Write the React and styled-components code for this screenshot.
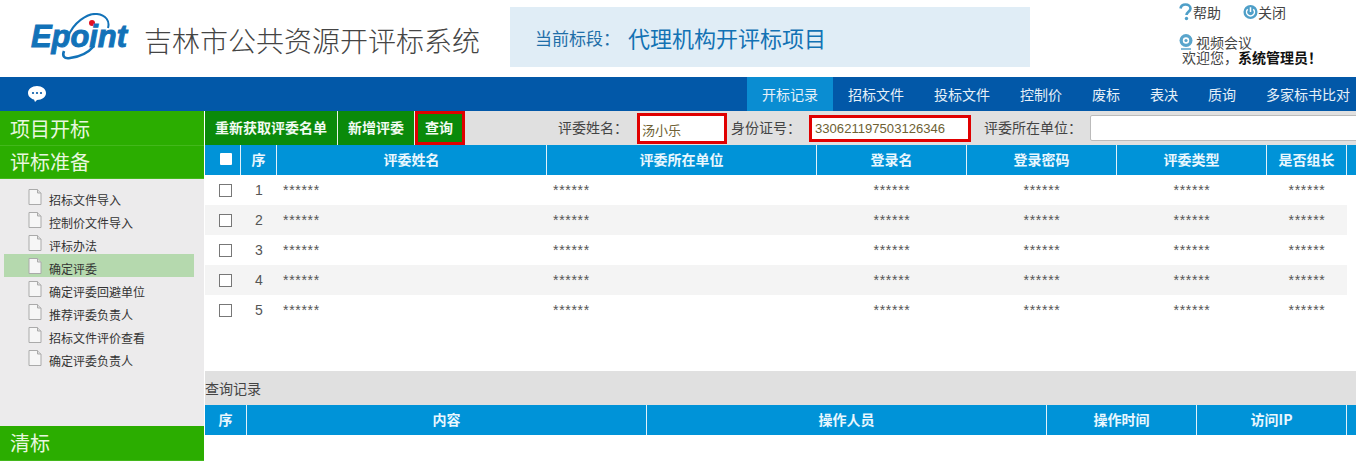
import React from "react";
import styled, { createGlobalStyle } from "styled-components";

const CJK = `"Noto Sans CJK SC", "Liberation Sans", sans-serif`;

const Global = createGlobalStyle`
  html, body { margin: 0; padding: 0; background: #fff; }
  body { font-family: ${CJK}; font-size: 12px; color: #333; overflow: hidden; }
  * { box-sizing: border-box; }
`;

const Page = styled.div`
  width: 1356px;
  height: 463px;
  display: flex;
  flex-direction: column;
  overflow: hidden;
`;

const Header = styled.header`
  height: 77px;
  display: flex;
  flex: none;
`;
const LogoBox = styled.div`
  width: 144px;
  padding: 13px 0 0 29px;
  flex: none;
`;
const Title = styled.h1`
  width: 366px;
  flex: none;
  margin: 0;
  font-size: 28px;
  line-height: 30px;
  font-weight: 300;
  color: #444;
  padding-top: 25px;
`;
const Section = styled.div`
  width: 520px;
  height: 60px;
  margin-top: 7px;
  flex: none;
  background: #e0edf6;
  display: flex;
  align-items: center;
  padding-left: 25px;
  color: #1f6fa8;
`;
const SectionLabel = styled.span`
  font-size: 17px;
  width: 93px;
`;
const SectionValue = styled.span`
  font-size: 22px;
  color: #1272b4;
`;
const UserArea = styled.div`
  margin-left: 148px;
  width: 178px;
  font-size: 14px;
  color: #444;
`;
const TopLinks = styled.div`
  display: flex;
  align-items: center;
  height: 24px;
`;
const TopLink = styled.span`
  display: inline-flex;
  align-items: center;
  width: ${(p) => p.$w}px;
`;
const VideoRow = styled.div`
  display: flex;
  align-items: center;
  gap: 3px;
  margin-top: 10px;
  height: 16px;
  line-height: 14px;
  padding-left: 1px;
`;
const Welcome = styled.div`
  height: 14px;
  line-height: 14px;
  padding-left: 4px;
  white-space: nowrap;
  b { color: #111; }
`;

const Nav = styled.nav`
  height: 34px;
  flex: none;
  background: #0258a8;
  display: flex;
  align-items: center;
`;
const ChatSlot = styled.div`
  width: 747px;
  padding-left: 27px;
  display: flex;
  flex: none;
`;
const NavItem = styled.a`
  width: ${(p) => p.$w}px;
  height: 34px;
  line-height: 34px;
  flex: none;
  text-align: center;
  font-size: 14px;
  color: #e6f0f8;
  background: ${(p) => (p.$active ? "#0a8dd2" : "transparent")};
`;

const Main = styled.div`
  flex: 1;
  display: flex;
  min-height: 0;
`;
const Side = styled.aside`
  width: 204px;
  flex: none;
  display: flex;
  flex-direction: column;
  background: #ecebec;
`;
const SideHead = styled.div`
  height: ${(p) => p.$h}px;
  flex: none;
  background: #2bad00;
  border-bottom: 1px solid #43b81c;
  color: #e8f7df;
  font-size: 20px;
  line-height: ${(p) => p.$lh}px;
  padding-left: 10px;
`;
const SideList = styled.ul`
  flex: 1;
  list-style: none;
  margin: 0;
  padding: 6px 10px 0 4px;
`;
const SideItem = styled.li`
  height: 23px;
  display: flex;
  align-items: center;
  gap: 7px;
  padding-left: 24px;
  font-size: 12px;
  color: #333;
  background: ${(p) => (p.$active ? "#b5d9ae" : "transparent")};
`;
const ItemText = styled.span`
  padding-top: 5px;
`;
const DocIcon = styled.svg`
  width: 14px;
  height: 16px;
  flex: none;
`;
const SideFoot = styled.div`
  height: 2px;
  flex: none;
  background: #fff;
`;

const Content = styled.main`
  flex: 1;
  margin-left: 1px;
  min-width: 0;
  display: flex;
  flex-direction: column;
`;
const Toolbar = styled.div`
  height: 34px;
  flex: none;
  background: #e0e0e0;
  display: flex;
  align-items: center;
`;
const GreenBtn = styled.button`
  width: ${(p) => p.$w}px;
  height: 34px;
  flex: none;
  border: 0;
  border-right: 1px solid #e8f2e8;
  background: #0a8a0a;
  color: #f2fbf2;
  font: 700 14px/30px ${CJK};
  padding: 0 0 2px;
`;
const QueryBtn = styled(GreenBtn)`
  border: 3px solid #e00000;
  padding: 0 2px 2px 0;
  line-height: 24px;
`;
const FieldLabel = styled.span`
  flex: none;
  width: ${(p) => p.$w}px;
  margin-left: ${(p) => p.$ml}px;
  font-size: 14px;
  color: #444;
  padding-bottom: 3px;
  white-space: nowrap;
`;
const Field = styled.div`
  flex: none;
  height: ${(p) => p.$h}px;
  width: ${(p) => p.$w}px;
  background: #fff;
  border: ${(p) => (p.$plain ? "1px solid #bbb" : "3px solid #e00000")};
  border-radius: ${(p) => (p.$plain ? "2px" : "0")};
  display: flex;
  align-items: center;
  padding: ${(p) => p.$pt || 0}px 0 0 ${(p) => p.$pl || 3}px;
  font-size: ${(p) => p.$fs || 13}px;
  color: #6e5f33;
  font-family: ${(p) => (p.$latin ? '"Liberation Sans", sans-serif' : CJK)};
`;

const Grid = styled.div`
  display: grid;
  grid-template-columns: ${(p) => p.$cols};
`;
const HeadCell = styled.div`
  height: 30px;
  background: #0093d8;
  border-right: 1px solid #dff1fa;
  color: #e9f7fe;
  font-size: 14px;
  font-weight: 700;
  display: flex;
  align-items: center;
  justify-content: center;
  padding-bottom: 2px;
`;
const HeadEnd = styled(HeadCell)`
  border-right: 0;
`;
const HeadBox = styled.span`
  width: 12px;
  height: 12px;
  margin-left: 7px;
  background: #fff;
  border-radius: 1px;
`;
const Row = styled(Grid)`
  height: 30px;
  width: ${(p) => p.$width}px;
  background: ${(p) => (p.$alt ? "#f4f4f4" : "#fff")};
`;
const Cell = styled.div`
  height: 30px;
  display: flex;
  align-items: center;
  justify-content: ${(p) => (p.$left ? "flex-start" : "center")};
  padding-left: ${(p) => (p.$left ? "6px" : "0")};
  font: 14px "Liberation Sans", sans-serif;
  color: #555;
`;
const Masked = styled.span`
  margin-top: -1px;
  letter-spacing: 0.7px;
`;
const Check = styled.span`
  width: 13px;
  height: 13px;
  border: 1px solid #777;
  background: #fff;
  margin-left: 5px;
`;
const Rows = styled.div`
  height: 196px;
  flex: none;
`;
const RecordBar = styled.div`
  height: 34px;
  flex: none;
  background: #e0e0e0;
  font-size: 14px;
  line-height: 34px;
  color: #444;
`;

const Doc = () => (
  <DocIcon viewBox="0 0 14 16">
    <path d="M1 .5h8.5L13 4v11.5H1z" fill="#f6f6f6" stroke="#aaa" />
    <path d="M9.5 .5V4H13" fill="#ddd" stroke="#aaa" />
  </DocIcon>
);

const Logo = () => (
  <svg width="112" height="48" viewBox="0 0 112 48">
    <path d="M39 24C44 10 58 0 68 1c9 1 13 7 11 14" fill="none" stroke="#1272b8" strokeWidth="2" />
    <path d="M35 38c-2 5 0 8 6 7 9-1 18-5 24-12" fill="none" stroke="#1272b8" strokeWidth="2.600" />
    <circle cx="63" cy="10" r="3" fill="#e01020" />
    <text x="2" y="34" fontFamily="'Liberation Sans', sans-serif" fontStyle="italic" fontWeight="700" fontSize="32" fill="#1272b8" textLength="96" lengthAdjust="spacingAndGlyphs" stroke="#1272b8" strokeWidth="1">Epoint</text>
  </svg>
);

const ChatIcon = () => (
  <svg width="20" height="18" viewBox="0 0 20 18">
    <path d="M10 1c5 0 9 3 9 7s-4 7-9 7l-2 2-1-2.400C3.500 13.600 1 11 1 8c0-4 4-7 9-7z" fill="#fff" />
    <circle cx="6" cy="8" r="1.100" fill="#0258a8" />
    <circle cx="10" cy="8" r="1.100" fill="#0258a8" />
    <circle cx="14" cy="8" r="1.100" fill="#0258a8" />
  </svg>
);

const navs = [["开标记录", 86, true], ["招标文件", 86], ["投标文件", 86], ["控制价", 72], ["废标", 58], ["表决", 58], ["质询", 58], ["多家标书比对", 114]];
const sideItems = ["招标文件导入", "控制价文件导入", "评标办法", "确定评委", "确定评委回避单位", "推荐评委负责人", "招标文件评价查看", "确定评委负责人"];
const cols = "36px 36px 270px 270px 150px 150px 150px 80px 10px";
const recCols = "42px 400px 400px 150px 150px 9px";
const heads = ["序", "评委姓名", "评委所在单位", "登录名", "登录密码", "评委类型", "是否组长"];
const recHeads = ["序", "内容", "操作人员", "操作时间", "访问IP"];

export default function App() {
  return (
    <Page>
      <Global />
      <Header>
        <LogoBox><Logo /></LogoBox>
        <Title>吉林市公共资源开评标系统</Title>
        <Section>
          <SectionLabel>当前标段：</SectionLabel>
          <SectionValue>代理机构开评标项目</SectionValue>
        </Section>
        <UserArea>
          <TopLinks>
            <TopLink $w={65}>
              <svg width="15" height="18" viewBox="0 0 15 18"><path d="M2.500 5.500C3 2.500 5 1.500 7.500 1.500c3 0 5 1.700 5 4 0 3-4 3.500-4 6.500" fill="none" stroke="#4f9fc8" strokeWidth="2.600" /><circle cx="8.500" cy="15.500" r="1.700" fill="#4f9fc8" /></svg>
              帮助
            </TopLink>
            <TopLink $w={60}>
              <svg width="15" height="16" viewBox="0 0 16 16"><circle cx="8" cy="8" r="7.500" fill="#4f9fc8" /><path d="M5 5a4.200 4.200 0 1 0 6 0M8 3v5" fill="none" stroke="#fff" strokeWidth="1.600" /></svg>
              关闭
            </TopLink>
          </TopLinks>
          <VideoRow>
            <svg width="14" height="16" viewBox="0 0 14 16"><circle cx="7" cy="6.500" r="6.500" fill="#5aa5cc" /><circle cx="7" cy="6.500" r="3.200" fill="#fff" /><circle cx="7" cy="6.500" r="1.600" fill="#5aa5cc" /><path d="M2 15h10" stroke="#5aa5cc" strokeWidth="1.500" /></svg>
            视频会议
          </VideoRow>
          <Welcome>欢迎您，<b>系统管理员！</b></Welcome>
        </UserArea>
      </Header>
      <Nav>
        <ChatSlot><ChatIcon /></ChatSlot>
        {navs.map(([t, w, a]) => <NavItem key={t} $w={w} $active={a}>{t}</NavItem>)}
      </Nav>
      <Main>
        <Side>
          <SideHead $h={35} $lh={35}>项目开标</SideHead>
          <SideHead $h={33} $lh={32}>评标准备</SideHead>
          <SideList>
            {sideItems.map((t) => (
              <SideItem key={t} $active={t === "确定评委"}><Doc /><ItemText>{t}</ItemText></SideItem>
            ))}
          </SideList>
          <SideHead $h={35} $lh={33}>清标</SideHead>
          <SideFoot />
        </Side>
        <Content>
          <Toolbar>
            <GreenBtn $w={133}>重新获取评委名单</GreenBtn>
            <GreenBtn $w={77}>新增评委</GreenBtn>
            <QueryBtn $w={50}>查询</QueryBtn>
            <FieldLabel $w={79} $ml={93}>评委姓名：</FieldLabel>
            <Field $w={90} $h={31} $pt={3} $pl={2}>汤小乐</Field>
            <FieldLabel $w={78} $ml={4}>身份证号：</FieldLabel>
            <Field $w={162} $h={27} $latin $fs={13.100}>330621197503126346</Field>
            <FieldLabel $w={106} $ml={13}>评委所在单位：</FieldLabel>
            <Field $w={270} $h={26} $plain />
          </Toolbar>
          <Grid $cols={cols}>
            <HeadCell><HeadBox /></HeadCell>
            {heads.map((h) => <HeadCell key={h}>{h}</HeadCell>)}
            <HeadEnd />
          </Grid>
          <Rows>
            {[1, 2, 3, 4, 5].map((n) => (
              <Row key={n} $cols="36px 36px 270px 270px 150px 150px 150px 80px" $width={1142} $alt={n % 2 === 0}>
                <Cell><Check /></Cell>
                <Cell>{n}</Cell>
                <Cell $left><Masked>******</Masked></Cell>
                <Cell $left><Masked>******</Masked></Cell>
                <Cell><Masked>******</Masked></Cell>
                <Cell><Masked>******</Masked></Cell>
                <Cell><Masked>******</Masked></Cell>
                <Cell><Masked>******</Masked></Cell>
              </Row>
            ))}
          </Rows>
          <RecordBar>查询记录</RecordBar>
          <Grid $cols={recCols}>
            {recHeads.map((h) => <HeadCell key={h}>{h}</HeadCell>)}
            <HeadEnd />
          </Grid>
        </Content>
      </Main>
    </Page>
  );
}
